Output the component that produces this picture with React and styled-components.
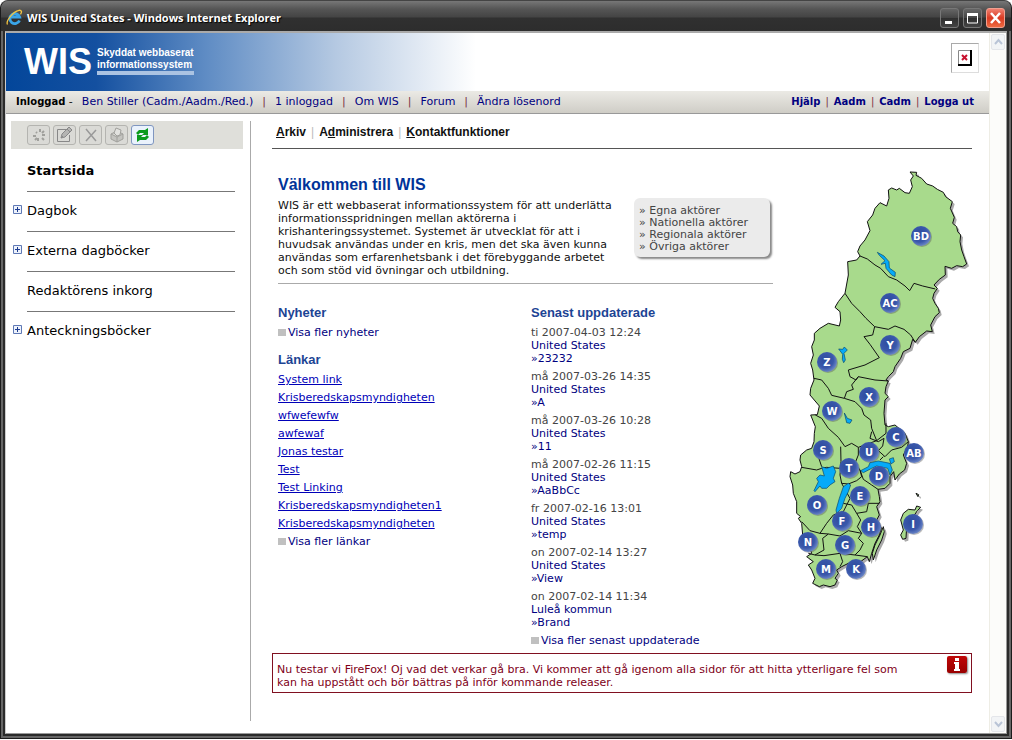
import React from 'react'
import styled, { createGlobalStyle } from 'styled-components'

const GlobalStyle = createGlobalStyle`
  * { box-sizing: border-box; }
  body {
    margin: 0;
    background: #fff;
    font-family: Verdana, "DejaVu Sans", sans-serif;
    font-size: 11px;
    line-height: 13px;
    color: #111;
  }
  a { color: #000080; text-decoration: none; }
  h1, h2, p, ul { margin: 0; padding: 0; }
  ul { list-style: none; }
  button { padding: 0; font: inherit; }
`

const Window = styled.div`
  display: flex;
  flex-direction: column;
  min-height: calc(100vh - 1px);
  border: 1px solid #1c1c1c;
  border-top-color: #444;
  border-radius: 8px 8px 0 0;
  background: #2b2b2b;
  padding: 0 4px 4px;
  box-shadow: inset 2px 0 0 #666, inset -2px 0 0 #666, inset 0 -2px 0 #666;
`

const TitleBar = styled.header`
  display: flex;
  align-items: center;
  gap: 4px;
  flex: none;
  height: 30px;
  margin: 0 -4px;
  padding: 3px 6px 0 5px;
  border-radius: 7px 7px 0 0;
  background: linear-gradient(#777 0, #555 8px, #444 16px, #303030 17px, #2d2d2d 100%);
`

const Title = styled.span`
  flex: 1;
  color: #fff;
  font: bold 11px/16px "Trebuchet MS", "Open Sans", sans-serif;
  text-shadow: 1px 1px 1px #000;
`

const Buttons = styled.div`
  display: flex;
  gap: 4px;
`

const WinButton = styled.button`
  display: flex;
  width: 19px;
  height: 20px;
  border: 1px solid ${p => (p.$close ? '#f0a090' : '#777')};
  border-radius: 3px;
  background: ${p => (p.$close
    ? 'linear-gradient(#f08070, #d93a22 50%, #ee6a40)'
    : 'linear-gradient(#666, #444 50%, #2f2f2f 51%, #444)')};
`

const Client = styled.div`
  display: flex;
  flex: 1;
  min-height: 0;
  border: 1px solid #999;
  border-top: 2px solid #aaa;
  border-left-color: #ccc;
  background: #fff;
`

const Page = styled.div`
  display: flex;
  flex-direction: column;
  flex: 1;
  min-width: 0;
`

const ScrollBar = styled.div`
  display: flex;
  flex-direction: column;
  justify-content: space-between;
  width: 17px;
  padding: 1px;
  border-left: 1px solid #eeede5;
  background: #fcfcfa;
`

const ScrollButton = styled.button`
  height: 16px;
  border: 1px solid #e4e6ea;
  border-radius: 2px;
  background: #f2f4f6;
  svg { display: block; }
`

const Banner = styled.div`
  display: flex;
  flex: none;
  height: 58px;
  padding: 10px 10px 0 18px;
  background: linear-gradient(90deg, #03469a 0, #1450a0 90px, #5f8cc4 200px, #b5c9e2 330px, #fff 470px);
  color: #fff;
`

const Logo = styled.div`
  font: bold 36px/37px Arial, "Liberation Sans", sans-serif;
`

const Slogan = styled.div`
  align-self: flex-start;
  margin: 4px auto 0 5px;
  border-bottom: 4px solid #abc3e2;
  font: bold 10px/12px Arial, "Liberation Sans", sans-serif;
`

const MissingImage = styled.div`
  display: grid;
  place-items: center;
  width: 28px;
  height: 30px;
  border: 1px solid #aaa;
  border-right-color: #ddd;
  border-bottom-color: #ddd;
`

const UserBar = styled.div`
  display: flex;
  align-items: center;
  justify-content: space-between;
  flex: none;
  height: 23px;
  padding: 0 15px 2px 10px;
  border-bottom: 1px solid #999;
  background: linear-gradient(#ebeae5, #cfcdc6);
  white-space: nowrap;
`

const UserLinks = styled.div`
  display: flex;
  gap: ${p => (p.$bold ? '5px' : '9px')};
  font-weight: ${p => (p.$bold ? 'bold' : 'normal')};
  font-size: ${p => (p.$bold ? '10px' : '11px')};
  b { font-size: 10px; color: #000; }
  i { font-style: normal; font-weight: normal; color: #734; }
`

const Columns = styled.div`
  display: flex;
  flex: 1;
  padding: 7px 17px 12px 5px;
`

const Sidebar = styled.aside`
  width: 240px;
  flex: none;
  padding-right: 7px;
  border-right: 1px solid #aaa;
`

const Toolbar = styled.div`
  display: flex;
  gap: 3px;
  height: 28px;
  padding: 4px 0 0 16px;
  background: #dfdfda;
`

const Tool = styled.button`
  display: grid;
  place-items: center;
  width: 23px;
  height: 20px;
  border: 1px solid ${p => (p.$active ? '#7f96c0' : '#b4b4b0')};
  border-radius: 3px;
  background: ${p => (p.$active ? '#eaf2fc' : '#dadad6')};
  color: #a0a09c;
`

const NavItem = styled.li`
  position: relative;
  height: 40px;
  margin: 0 8px 0 16px;
  padding-top: 11px;
  border-bottom: 1px solid ${p => (p.$last ? 'transparent' : '#777')};
  font-size: 13px;
  line-height: 16px;
  font-weight: ${p => (p.$bold ? 'bold' : 'normal')};
  a { color: #000; }
`

const NavList = styled.ul`
  padding-top: 3px;
`

const Expand = styled.button`
  position: absolute;
  top: 13px;
  left: -14px;
  width: 9px;
  height: 9px;
  border: 0;
  background: none;
  svg { display: block; }
`

const Main = styled.main`
  flex: 1;
  min-width: 0;
  margin-left: 21px;
`

const Menu = styled.nav`
  display: flex;
  gap: 5px;
  height: 28px;
  padding: 5px 4px 0;
  border-bottom: 1px solid #555;
  font: bold 12px/13px Arial, "Liberation Sans", sans-serif;
  color: #bbb;
  span { font-weight: normal; }
  a { color: #111; }
`

const Content = styled.div`
  display: flex;
  justify-content: space-between;
  padding: 0 0 6px 6px;
`

const Left = styled.div`
  flex: 1;
  max-width: 495px;
`

const Intro = styled.section`
  display: flex;
  justify-content: space-between;
  margin-top: 26px;
  padding-bottom: 6px;
  border-bottom: 1px solid #aaa;
`

const IntroText = styled.div`
  width: 346px;
`

const Heading = styled.h1`
  margin-bottom: 4px;
  color: #039;
  font: bold 16px/20px Arial, "Liberation Sans", sans-serif;
`

const ActorBox = styled.ul`
  align-self: flex-start;
  width: 136px;
  height: 59px;
  margin: 23px 3px 0 0;
  padding: 7px 5px;
  border-radius: 6px;
  background: #ebebeb;
  box-shadow: 2px 2px 2px #888;
  line-height: 12px;
  white-space: nowrap;
  a { color: #444; }
`

const Lists = styled.div`
  display: grid;
  grid-template-columns: 253px 1fr;
  padding-top: 20px;
`

const SubHeading = styled.h2`
  margin-bottom: 4px;
  color: #1c4494;
  font: bold 13px/18px Arial, "Liberation Sans", sans-serif;
`

const More = styled.a`
  display: flex;
  align-items: center;
  gap: 2px;
  &::before {
    content: '';
    width: 8px;
    height: 7px;
    background: #c0c0c0;
  }
`

const Links = styled.ul`
  margin-top: -2px;
  margin-bottom: 2px;
  line-height: 18px;
  a { color: #0000b8; text-decoration: underline; }
`

const NewsBlock = styled.section`
  margin-bottom: 12px;
`

const Entry = styled.li`
  margin-bottom: 5px;
  color: #444;
  a { display: block; }
`

const MapSvg = styled.svg`
  flex: none;
  width: 200px;
  height: 440px;
  margin: 11px -8px 0 0;
  text { fill: #fff; font: bold 10px "DejaVu Sans", sans-serif; text-anchor: middle; }
`

const Notice = styled.div`
  display: flex;
  justify-content: space-between;
  align-items: flex-start;
  min-height: 40px;
  padding: 2px 4px;
  border: 1px solid #801020;
  color: #800018;
`

const NoticeText = styled.p`
  max-width: 640px;
  padding-top: 7px;
`

const InfoIcon = styled.span`
  width: 20px;
  height: 17px;
  border-radius: 2px;
  background: linear-gradient(#c00808, #900);
  box-shadow: 1px 1px 2px #888;
  svg { display: block; }
`

const nav = [
  { label: 'Startsida', bold: true },
  { label: 'Dagbok', expand: true },
  { label: 'Externa dagböcker', expand: true },
  { label: 'Redaktörens inkorg' },
  { label: 'Anteckningsböcker', expand: true },
]

const links = ['System link', 'Krisberedskapsmyndigheten', 'wfwefewfw', 'awfewaf', 'Jonas testar', 'Test',
  'Test Linking', 'Krisberedskapsmyndigheten1', 'Krisberedskapsmyndigheten']

const updates = [
  ['ti 2007-04-03 12:24', 'United States', '23232'],
  ['må 2007-03-26 14:35', 'United States', 'A'],
  ['må 2007-03-26 10:28', 'United States', '11'],
  ['må 2007-02-26 11:15', 'United States', 'AaBbCc'],
  ['fr 2007-02-16 13:01', 'United States', 'temp'],
  ['on 2007-02-14 13:27', 'United States', 'View'],
  ['on 2007-02-14 11:34', 'Luleå kommun', 'Brand'],
]

// county letter, x, y on the map
const counties = [
  ['BD', 141, 76], ['AC', 110, 143], ['Y', 110, 185], ['Z', 47, 202], ['X', 89, 237], ['W', 52, 251],
  ['S', 43, 290], ['C', 116, 277], ['U', 89, 292], ['AB', 134, 293], ['T', 69, 308], ['D', 99, 316],
  ['O', 37, 345], ['E', 80, 336], ['F', 62, 361], ['I', 133, 364], ['H', 91, 367], ['N', 28, 382],
  ['G', 65, 385], ['M', 46, 409], ['K', 76, 409],
]

// land, islands and borders are drawn at three times the map size
const land = 'M390 36 410 37 408 46 425 55 440 72 458 78 472 88 490 97 497 110 517 125 511 145 523 172 518 190 530 200 533 215 542 225 540 245 545 270 552 290 560 312 548 320 530 317 515 325 495 319 496 345 478 358 462 375 472 385 462 400 458 415 465 430 475 445 478 458 465 470 452 495 457 515 440 513 418 530 406 547 398 538 390 565 370 575 362 595 345 620 340 635 325 650 318 660 325 663 318 680 315 700 325 710 315 720 312 760 315 795 325 800 345 795 375 820 385 845 383 860 370 885 380 910 374 930 358 942 345 960 341 935 330 950 330 970 315 985 294 988 298 1010 300 1025 290 1040 298 1065 290 1080 304 1105 298 1125 285 1150 275 1180 268 1205 262 1190 235 1210 205 1210 185 1220 170 1230 175 1240 165 1255 172 1260 165 1275 150 1280 130 1275 118 1280 98 1270 105 1255 95 1230 85 1215 100 1205 80 1190 95 1180 85 1150 68 1125 65 1090 55 1075 62 1070 50 1060 50 1025 40 1000 38 975 30 950 32 935 45 942 60 935 65 920 60 900 62 885 80 870 95 865 102 845 103 820 106 800 92 765 112 764 118 738 90 705 92 685 102 660 98 630 92 610 100 585 95 560 103 540 103 520 120 505 145 490 178 498 182 480 180 455 165 442 175 425 195 400 205 345 203 305 230 300 240 288 233 275 240 258 255 240 270 212 262 185 278 165 285 145 300 128 320 138 327 115 325 90 335 84 350 90 358 85 375 98 388 100 397 80 392 60 400 48Z'

const islands = 'M310 1100 313 1115 305 1140 290 1170 280 1200 277 1180 285 1155 300 1125ZM410 1038 422 1042 412 1052 400 1070 380 1100 378 1135 368 1138 362 1125 370 1110 362 1080 370 1060 385 1048 405 1050ZM408 1000 416 1004 414 1010Z'

const borders = [
  'M240 288 262 297 285 315 302 325 325 350 350 360 375 378 389 392 402 370 428 378 466 387',
  'M195 400 215 430 240 455 258 475 284 500 278 525 252 530 270 553 298 593 255 615 205 630 210 650 228 660 235 650 285 660 325 663',
  'M284 500 325 508 345 498 372 508 392 525 406 547',
  'M102 655 125 660 145 685 155 706 193 715 200 695 220 688 215 675 235 650',
  'M193 715 225 725 245 745 252 765 272 780 275 805 290 842 318 820 318 790',
  'M106 765 125 775 145 805 175 832 195 860 215 850 235 862 290 842',
  'M182 860 183 905 180 945 185 970 205 972 230 962 245 950 240 930 225 910 235 885 235 862',
  'M275 815 270 835 295 845 312 835 308 858 295 872 315 890 335 870 365 862 385 845',
  'M65 922 110 930 125 925 140 922 180 925M115 890 125 920',
  'M240 930 250 958 275 975 294 988M310 890 300 900',
  'M185 970 210 1015 190 1055 160 1065 140 1090 120 1120 90 1112 65 1085',
  'M190 1030 215 1035 230 1060 260 1055 265 1030 298 1030',
  'M230 1060 242 1080 232 1100 245 1120 205 1112 180 1128 145 1122 120 1120M145 1122 128 1135 132 1170 105 1185 85 1180',
  'M245 1120 235 1135 250 1150 240 1170 225 1185 180 1180 132 1187 105 1185',
  'M180 1180 188 1205 180 1220M225 1185 262 1190',
]

const lakes = 'M125 920 140 925 160 918 167 935 160 955 165 965 150 975 140 985 125 985 120 978 105 995 102 992 115 965 110 955 120 945 133 948ZM205 970 212 975 205 995 195 1015 185 1045 170 1060 168 1050 178 1015 190 980ZM242 932 265 920 270 908 295 903 330 910 337 930 330 945 323 925 290 918 275 925 250 938ZM328 897 340 893 343 905 333 912ZM292 277 312 288 327 305 328 324 346 337 345 350 335 345 318 325 316 310 303 313 315 302 298 286ZM176 567 188 568 193 561 202 570 192 580 196 600 191 608 187 598 188 583ZM193 759 202 775 216 780 210 790 200 788Z'

const SwedenMap = () => (
  <MapSvg viewBox="0 0 200 440" role="img" aria-label="Sveriges län">
    <defs>
      <radialGradient id="pin" cx="42%" cy="40%" r="62%">
        <stop offset="0" stopColor="#2d4b9d" />
        <stop offset="0.65" stopColor="#3a58ab" />
        <stop offset="1" stopColor="#6f89c8" />
      </radialGradient>
    </defs>
    <g transform="scale(0.33333)" strokeLinejoin="round">
      <path d={land + islands} fill="#aaa" transform="translate(7 7)" />
      <path d={land + islands} fill="#a8da8c" stroke="#111" strokeWidth="3" />
      <path d={borders.join('')} fill="none" stroke="#111" strokeWidth="3" />
      <path d={lakes} fill="#05aaf8" stroke="#064468" strokeWidth="2" />
    </g>
    {counties.map(([code, x, y]) => (
      <a href="#lan" key={code}>
        <circle cx={x + 1} cy={y + 1} r="10" fill="#555" opacity="0.4" />
        <circle cx={x} cy={y} r="10" fill="url(#pin)" />
        <text x={x} y={y + 4}>{code}</text>
      </a>
    ))}
  </MapSvg>
)

const IeLogo = () => (
  <svg width="17" height="17" viewBox="0 0 17 17" fill="none">
    <path d="M13.5 11.5A5 5 0 1 1 13.6 8H5" stroke="#3aa5e8" strokeWidth="2.8" />
    <path d="M1.5 15.5C-.5 12 7 2.5 13 1.3c3-.3 3 1.8 1.5 4" stroke="#f4c542" strokeWidth="1.3" />
  </svg>
)

const App = () => {
  return (
    <>
      <GlobalStyle />
      <Window>
        <TitleBar>
          <IeLogo />
          <Title>WIS United States - Windows Internet Explorer</Title>
          <Buttons>
            <WinButton aria-label="Minimera">
              <svg width="17" height="18"><path d="M4 13.5h7" stroke="#fff" strokeWidth="3" /></svg>
            </WinButton>
            <WinButton aria-label="Maximera">
              <svg width="17" height="18"><path d="M3.5 4v10h10V4" fill="none" stroke="#fff" /><path d="M3 5.500h11" stroke="#fff" strokeWidth="3" /></svg>
            </WinButton>
            <WinButton $close aria-label="Stäng">
              <svg width="17" height="18"><path d="M4 4l9 10M13 4L4 14" stroke="#fff" strokeWidth="2.5" /></svg>
            </WinButton>
          </Buttons>
        </TitleBar>

        <Client>
          <Page>
            <Banner>
              <Logo>WIS</Logo>
              <Slogan>Skyddat webbaserat<br />informationssystem</Slogan>
              <MissingImage>
                <svg width="14" height="16" fill="none">
                  <path d="M.5 15V.5H13" stroke="#888" />
                  <path d="M0 15h13V0" stroke="#000" strokeWidth="2" />
                  <path d="M4 5l5 5M9 5l-5 5" stroke="#c8102e" strokeWidth="2" />
                </svg>
              </MissingImage>
            </Banner>

            <UserBar>
              <UserLinks>
                <span><b>Inloggad</b> -</span>
                <a href="#user">Ben Stiller (Cadm./Aadm./Red.)</a>
                <i>|</i>
                <a href="#online">1 inloggad</a>
                <i>|</i>
                <a href="#om">Om WIS</a>
                <i>|</i>
                <a href="#forum">Forum</a>
                <i>|</i>
                <a href="#losen">Ändra lösenord</a>
              </UserLinks>
              <UserLinks $bold>
                <a href="#hjalp">Hjälp</a>
                <i>|</i>
                <a href="#aadm">Aadm</a>
                <i>|</i>
                <a href="#cadm">Cadm</a>
                <i>|</i>
                <a href="#ut">Logga ut</a>
              </UserLinks>
            </UserBar>

            <Columns>
              <Sidebar>
                <Toolbar>
                  <Tool aria-label="Ny">
                    <svg width="16" height="16" fill="none" stroke="currentColor" strokeWidth="2"><path d="M9 2v3M7 11v3M2 9h3M11 8h3M5 5l1 1M13 4l-2 2M4 13l2-2M11 11l2 2" /></svg>
                  </Tool>
                  <Tool aria-label="Redigera">
                    <svg width="19" height="18" fill="none" stroke="#888"><path d="M11 3.5H2.5v12h12V9" /><path d="M6 12l1-4 7-7 3 3-7 7z" fill="#b4b4b2" /><path d="M6 12l2-2M12 3l3 3" /></svg>
                  </Tool>
                  <Tool aria-label="Ta bort">
                    <svg width="16" height="16" stroke="#999" strokeWidth="1.5"><path d="M3 2l10 12M13 3L3 14" /></svg>
                  </Tool>
                  <Tool aria-label="Skriv ut">
                    <svg width="18" height="16" fill="#c4c4c0" stroke="currentColor"><path d="M3 7l6-3 6 3v5l-6 3-6-3zM3 7l6 3 6-3M9 10v5" /><path d="M6 6l2-5 5 2-1 5-3 1z" fill="#e2e2df" /></svg>
                  </Tool>
                  <Tool $active aria-label="Uppdatera">
                    <svg width="17" height="16" fill="#0a9a1c"><path d="M2 6l3-3h6l3-2v7H8l2-2H6L4 8z" /><path d="M15 10l-3 3H6l-3 2V8h6l-2 2h4l2-2z" /></svg>
                  </Tool>
                </Toolbar>
                <NavList>
                  {nav.map((item, i) => (
                    <NavItem key={item.label} $bold={item.bold} $last={i === nav.length - 1}>
                      {item.expand && (
                        <Expand aria-label={`Visa ${item.label}`}>
                          <svg width="9" height="9" fill="#eef3fc" stroke="#5f79b5"><path d="M.5.5h8v8h-8z" /><path d="M2 4.5h5M4.5 2v5" stroke="#1c3c90" /></svg>
                        </Expand>
                      )}
                      <a href="#nav">{item.label}</a>
                    </NavItem>
                  ))}
                </NavList>
              </Sidebar>

              <Main>
                <Menu>
                  <a href="#arkiv"><u>A</u>rkiv</a>
                  <span>|</span>
                  <a href="#admin">A<u>d</u>ministrera</a>
                  <span>|</span>
                  <a href="#kontakt"><u>K</u>ontaktfunktioner</a>
                </Menu>

                <Content>
                  <Left>
                    <Intro>
                      <IntroText>
                        <Heading>Välkommen till WIS</Heading>
                        <p>
                          WIS är ett webbaserat informationssystem för att underlätta informationsspridningen mellan
                          aktörerna i<br />krishanteringssystemet. Systemet är utvecklat för att i<br />huvudsak
                          användas under en kris, men det ska även kunna användas som erfarenhetsbank i det
                          förebyggande arbetet och som stöd vid övningar och utbildning.
                        </p>
                      </IntroText>
                      <ActorBox>
                        <li><a href="#egna">» Egna aktörer</a></li>
                        <li><a href="#nationella">» Nationella aktörer</a></li>
                        <li><a href="#regionala">» Regionala aktörer</a></li>
                        <li><a href="#ovriga">» Övriga aktörer</a></li>
                      </ActorBox>
                    </Intro>

                    <Lists>
                      <div>
                        <NewsBlock>
                          <SubHeading>Nyheter</SubHeading>
                          <More href="#nyheter">Visa fler nyheter</More>
                        </NewsBlock>
                        <SubHeading>Länkar</SubHeading>
                        <Links>
                          {links.map((label, i) => (
                            <li key={i}><a href="#lank">{label}</a></li>
                          ))}
                        </Links>
                        <More href="#lankar">Visa fler länkar</More>
                      </div>
                      <div>
                        <SubHeading>Senast uppdaterade</SubHeading>
                        <ul>
                          {updates.map(([date, who, title]) => (
                            <Entry key={date}>
                              {date}
                              <a href="#who">{who}</a>
                              <a href="#post">»{title}</a>
                            </Entry>
                          ))}
                        </ul>
                        <More href="#senaste">Visa fler senast uppdaterade</More>
                      </div>
                    </Lists>
                  </Left>
                  <SwedenMap />
                </Content>

                <Notice>
                  <NoticeText>
                    Nu testar vi FireFox! Oj vad det verkar gå bra. Vi kommer att gå igenom alla sidor för att hitta
                    ytterligare fel som kan ha uppstått och bör bättras på inför kommande releaser.
                  </NoticeText>
                  <InfoIcon>
                    <svg width="20" height="17" fill="#fff"><path d="M8 2h4v3H8zM7 6h5v7h1v2H7v-2h1V8H7z" /></svg>
                  </InfoIcon>
                </Notice>
              </Main>
            </Columns>
          </Page>

          <ScrollBar>
            <ScrollButton aria-label="Upp">
              <svg width="13" height="14" fill="none" stroke="#b9c4d6" strokeWidth="2"><path d="M3 9l3.5-4L10 9" /></svg>
            </ScrollButton>
            <ScrollButton aria-label="Ner">
              <svg width="13" height="14" fill="none" stroke="#b9c4d6" strokeWidth="2"><path d="M3 5l3.5 4L10 5" /></svg>
            </ScrollButton>
          </ScrollBar>
        </Client>
      </Window>
    </>
  )
}

export default App
